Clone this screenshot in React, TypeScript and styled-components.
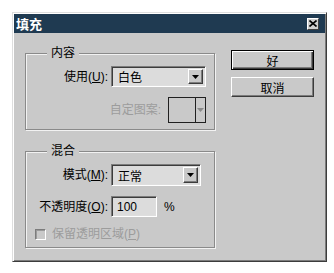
import React from 'react'
import styled, { createGlobalStyle } from 'styled-components'

const GlobalStyle = createGlobalStyle`
    body {
        margin: 0;
        background: #ffffff;
        font-family: "Liberation Sans", "Noto Sans CJK SC", sans-serif;
        font-size: 12px;
    }
`

const StyledScreen = styled.div`
    padding: 12px 0 0 12px;
`

const StyledDialog = styled.div`
    box-sizing: border-box;
    width: 315px;
    height: 250px;
    display: flex;
    flex-direction: column;
    background: #c9c9c9;
    padding: 1px;
    border: 1px solid;
    border-color: #dedede #3c3c3c #3c3c3c #dedede;
    box-shadow: inset 1px 1px 0 #ffffff, inset -1px -1px 0 #7c7c7c;
`

const StyledTitleBar = styled.div`
    height: 19px;
    display: flex;
    align-items: center;
    justify-content: space-between;
    padding: 0 6px 0 2px;
    background: #1f3a51;
`

const StyledTitle = styled.div`
    color: #ffffff;
    font-weight: bold;
    font-size: 13px;
`

const StyledClose = styled.div`
    box-sizing: border-box;
    width: 12px;
    height: 12px;
    display: flex;
    align-items: center;
    justify-content: center;
    background: #d0d0d0;
    border: 1px solid;
    border-color: #ffffff #404040 #404040 #ffffff;
`

const StyledBody = styled.div`
    display: flex;
    flex-direction: row;
    gap: 16px;
    padding: 13px 0 0 11px;
`

const StyledLeft = styled.div`
    width: 190px;
    display: flex;
    flex-direction: column;
    gap: 14px;
`

const StyledGroup = styled.fieldset`
    margin: 0;
    padding: 6px 0 6px 9px;
    border: 1px solid #8a8a8a;
    box-shadow: inset 1px 1px 0 #f2f2f2, 1px 1px 0 #f2f2f2;
`

const StyledLegend = styled.legend`
    margin-left: 12px;
    padding: 0 4px;
    line-height: 14px;
    font-size: 12px;
    color: #000000;
    background: #c9c9c9;
`

const StyledGrid = styled.div<{ $rows: string }>`
    display: grid;
    grid-template-columns: 73px auto;
    grid-template-rows: ${p => p.$rows};
    column-gap: 3px;
    row-gap: 10px;
    align-items: center;
`

const StyledLabel = styled.div<{ $disabled?: boolean }>`
    text-align: right;
    white-space: nowrap;
    line-height: 14px;
    color: ${p => (p.$disabled ? '#9c9c9c' : '#000000')};
`

const StyledUnder = styled.span`
    text-decoration: underline;
`

const StyledSelect = styled.div<{ $width: number; $height: number }>`
    box-sizing: border-box;
    width: ${p => p.$width}px;
    height: ${p => p.$height}px;
    display: flex;
    align-items: stretch;
    background: #dcdcdc;
    border: 1px solid;
    border-color: #7c7c7c #ffffff #ffffff #7c7c7c;
    box-shadow: inset 1px 1px 0 #3c3c3c, inset -1px -1px 0 #dedede;
    padding: 2px;
`

const StyledValue = styled.div`
    flex: 1;
    display: flex;
    align-items: center;
    padding-left: 4px;
`

const StyledArrow = styled.div`
    box-sizing: border-box;
    width: 15px;
    display: flex;
    align-items: center;
    justify-content: center;
    background: #c9c9c9;
    border: 1px solid;
    border-color: #ffffff #3c3c3c #3c3c3c #ffffff;
    box-shadow: inset -1px -1px 0 #7c7c7c;
`

const StyledPatternRow = styled.div`
    grid-column: 1 / span 2;
    display: flex;
    align-items: center;
    justify-content: flex-end;
    gap: 7px;
    padding-right: 8px;
`

const StyledPattern = styled.div`
    box-sizing: border-box;
    width: 38px;
    height: 26px;
    display: flex;
    border: 1px solid #202020;
`

const StyledSwatch = styled.div`
    width: 26px;
    border-right: 1px solid #202020;
`

const StyledSwatchArrow = styled.div`
    flex: 1;
    display: flex;
    align-items: center;
    justify-content: center;
`

const StyledInputRow = styled.div`
    display: flex;
    align-items: center;
    gap: 7px;
`

const StyledInput = styled.div`
    box-sizing: border-box;
    width: 46px;
    height: 21px;
    display: flex;
    align-items: center;
    padding-left: 5px;
    background: #dcdcdc;
    border: 1px solid;
    border-color: #7c7c7c #ffffff #ffffff #7c7c7c;
    box-shadow: inset 1px 1px 0 #3c3c3c, inset -1px -1px 0 #dedede;
`

const StyledCheckRow = styled.div`
    grid-column: 1 / span 2;
    display: flex;
    align-items: center;
    gap: 6px;
    line-height: 14px;
    color: #9c9c9c;
`

const StyledCheck = styled.div`
    box-sizing: border-box;
    width: 11px;
    height: 11px;
    background: #c9c9c9;
    border: 1px solid;
    border-color: #7c7c7c #ffffff #ffffff #7c7c7c;
    box-shadow: inset 1px 1px 0 #9a9a9a;
`

const StyledRight = styled.div`
    display: flex;
    flex-direction: column;
    gap: 7px;
    margin-top: 4px;
`

const StyledButton = styled.div<{ $primary?: boolean }>`
    box-sizing: border-box;
    width: 83px;
    height: 20px;
    display: flex;
    align-items: center;
    justify-content: center;
    background: #c9c9c9;
    border: 1px solid;
    border-color: ${p => (p.$primary ? '#000000' : '#ffffff #3c3c3c #3c3c3c #ffffff')};
    box-shadow: ${p =>
        p.$primary
            ? 'inset 1px 1px 0 #ffffff, inset -1px -1px 0 #3c3c3c, inset -2px -2px 0 #7c7c7c'
            : 'inset -1px -1px 0 #7c7c7c'};
`

const DownTriangle = ({ color }: { color: string }) => (
    <svg width="7" height="4" viewBox="0 0 7 4">
        <path d="M0 0 H7 L3.5 4 Z" fill={color} />
    </svg>
)

const CloseIcon = () => (
    <svg width="8" height="7" viewBox="0 0 8 7">
        <path d="M0.5 0.5 L7.5 6.5 M7.5 0.5 L0.5 6.5" stroke="#000" strokeWidth="1.6" />
    </svg>
)

const Select = ({ value, width, height }: { value: string; width: number; height: number }) => (
    <StyledSelect $width={width} $height={height}>
        <StyledValue>{value}</StyledValue>
        <StyledArrow>
            <DownTriangle color="#000" />
        </StyledArrow>
    </StyledSelect>
)

const App = () => {
    return (
        <StyledScreen>
            <GlobalStyle />
            <StyledDialog>
                <StyledTitleBar>
                    <StyledTitle>填充</StyledTitle>
                    <StyledClose>
                        <CloseIcon />
                    </StyledClose>
                </StyledTitleBar>
                <StyledBody>
                    <StyledLeft>
                        <StyledGroup>
                            <StyledLegend>内容</StyledLegend>
                            <StyledGrid $rows="21px 26px">
                                <StyledLabel>
                                    使用(<StyledUnder>U</StyledUnder>):
                                </StyledLabel>
                                <Select value="白色" width={95} height={21} />
                                <StyledPatternRow>
                                    <StyledLabel $disabled>自定图案:</StyledLabel>
                                    <StyledPattern>
                                        <StyledSwatch />
                                        <StyledSwatchArrow>
                                            <DownTriangle color="#8a8a8a" />
                                        </StyledSwatchArrow>
                                    </StyledPattern>
                                </StyledPatternRow>
                            </StyledGrid>
                        </StyledGroup>
                        <StyledGroup>
                            <StyledLegend>混合</StyledLegend>
                            <StyledGrid $rows="22px 21px 14px">
                                <StyledLabel>
                                    模式(<StyledUnder>M</StyledUnder>):
                                </StyledLabel>
                                <Select value="正常" width={90} height={22} />
                                <StyledLabel>
                                    不透明度(<StyledUnder>O</StyledUnder>):
                                </StyledLabel>
                                <StyledInputRow>
                                    <StyledInput>100</StyledInput>
                                    <span>%</span>
                                </StyledInputRow>
                                <StyledCheckRow>
                                    <StyledCheck />
                                    <span>
                                        保留透明区域(<StyledUnder>P</StyledUnder>)
                                    </span>
                                </StyledCheckRow>
                            </StyledGrid>
                        </StyledGroup>
                    </StyledLeft>
                    <StyledRight>
                        <StyledButton $primary>好</StyledButton>
                        <StyledButton>取消</StyledButton>
                    </StyledRight>
                </StyledBody>
            </StyledDialog>
        </StyledScreen>
    )
}

export default App
